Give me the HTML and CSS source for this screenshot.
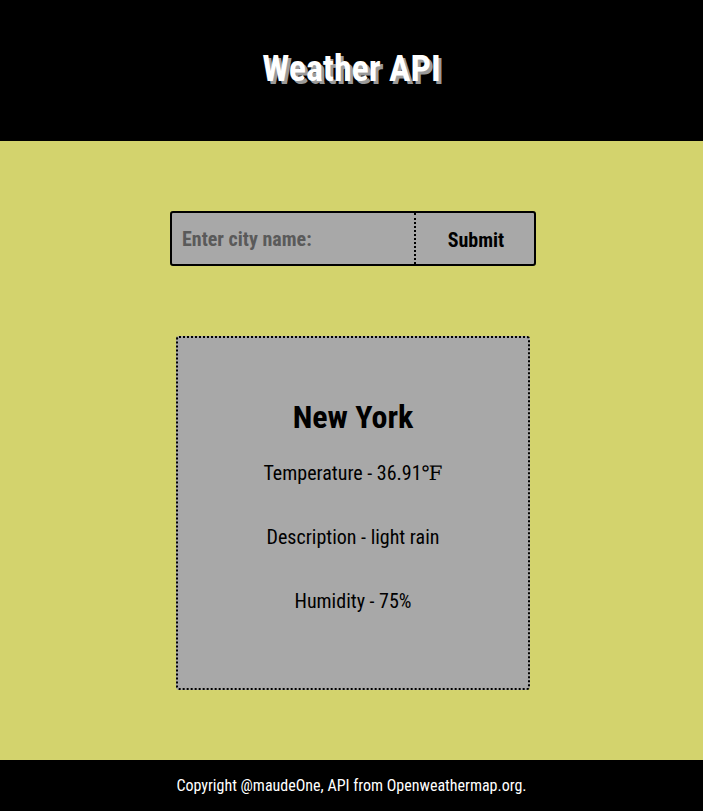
FILE: index.html
```html
<!DOCTYPE html>
<html lang="en">
<head>
<meta charset="utf-8">
<title>Weather API</title>
<link rel="stylesheet" href="styles.css">
</head>
<body>
<header class="site-header">
  <h1 class="title">Weather API</h1>
</header>
<main class="main">
  <form class="search">
    <input class="search-input" type="text" placeholder="Enter city name:">
    <button class="search-btn" type="button">Submit</button>
  </form>
  <section class="card">
    <h2 class="city">New York</h2>
    <p class="info">Temperature - 36.91<span class="deg">℉</span></p>
    <p class="info">Description - light rain</p>
    <p class="info">Humidity - 75%</p>
  </section>
</main>
<footer class="site-footer">
  <p class="copy">Copyright @maudeOne, API from Openweathermap.org.</p>
</footer>
</body>
</html>
```
FILE: styles.css
```css
* { box-sizing: border-box; }
html, body { margin: 0; padding: 0; }
body {
  font-family: "Roboto Condensed", Roboto, "Liberation Sans", sans-serif;
  font-stretch: condensed;
  background: #d3d36d;
  color: #000;
}
.site-header {
  background: #000;
  height: 141px;
  display: flex;
  align-items: center;
  justify-content: center;
  padding-bottom: 4px;
}
.title {
  margin: 0;
  color: #fff;
  font-size: 36px;
  font-weight: 700;
  text-shadow: 3px 3px 0 #9a9a9a;
}
.main {
  height: 619px;
  display: flex;
  flex-direction: column;
  align-items: center;
  padding-top: 70px;
}
.search {
  display: flex;
  width: 366px;
  height: 55px;
  border: 2px solid #000;
  border-radius: 3px;
  background: #a8a8a8;
  margin-left: 3px;
}
.search-input {
  width: 244px;
  border: none;
  border-right: 2px dotted #000;
  background: transparent;
  padding: 1px 10px 0;
  font: inherit;
  font-size: 20px;
  font-weight: 700;
  color: #555;
  outline: none;
}
.search-input::placeholder { color: #5a5a5a; }
.search-btn {
  flex: 1;
  border: none;
  background: transparent;
  font: inherit;
  font-size: 20px;
  font-weight: 700;
  color: #000;
  padding: 2px 0 0 2px;
}
.card {
  margin-top: 70px;
  width: 354px;
  height: 354px;
  margin-left: 3px;
  border: 2px dotted #000;
  border-radius: 3px;
  background: #a8a8a8;
  display: flex;
  flex-direction: column;
  align-items: center;
  padding-top: 60px;
}
.city {
  margin: 0 0 25px;
  font-size: 32px;
  font-weight: 700;
}
.info {
  margin: 0 0 40px;
  font-size: 20px;
  line-height: 24px;
}
.deg { font-family: "DejaVu Serif", "Liberation Serif", serif; font-stretch: normal; }
.site-footer {
  background: #000;
  height: 51px;
  display: flex;
  align-items: center;
  justify-content: center;
}
.copy {
  margin: 0;
  color: #fff;
  font-size: 16px;
}
```
